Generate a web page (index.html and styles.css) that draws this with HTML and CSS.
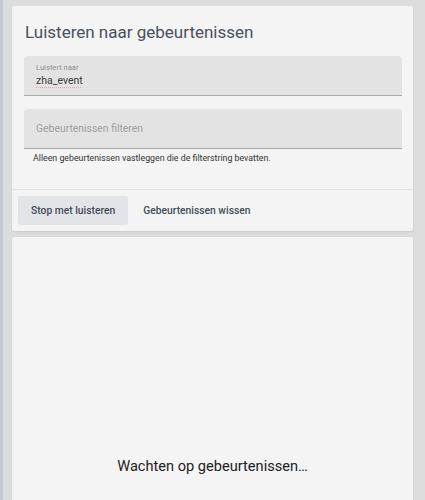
FILE: index.html
```html
<!DOCTYPE html>
<html lang="nl">
<head>
<meta charset="utf-8">
<link rel="stylesheet" href="styles.css">
</head>
<body>
<div class="page">
  <section class="card">
    <div class="card-content">
      <h1 class="title">Luisteren naar gebeurtenissen</h1>
      <div class="field">
        <span class="field-label">Luistert naar</span>
        <span class="field-value"><span class="spell">zha_event</span></span>
      </div>
      <div class="field field-empty">
        <span class="placeholder">Gebeurtenissen filteren</span>
      </div>
      <p class="helper">Alleen gebeurtenissen vastleggen die de filterstring bevatten.</p>
    </div>
    <div class="card-actions">
      <button class="btn btn-filled">Stop met luisteren</button>
      <button class="btn">Gebeurtenissen wissen</button>
    </div>
  </section>
  <section class="card card-events">
    <p class="waiting">Wachten op gebeurtenissen…</p>
  </section>
</div>
</body>
</html>
```
FILE: styles.css
```css
html, body {
  margin: 0;
  padding: 0;
  background: #dcdcdc;
  font-family: Roboto, "Noto Sans", sans-serif;
}
body {
  height: 500px;
  overflow: hidden;
  border-left: 3px solid #c6cad1;
  box-sizing: border-box;
}
.page {
  padding: 6px 12px 0 9px;
  display: flex;
  flex-direction: column;
  gap: 6px;
}
.card {
  background: #f4f4f4;
  border-radius: 2px;
  box-shadow: 0 1px 2px rgba(0,0,0,0.08);
}
.card-content {
  padding: 14px 11px 25px 12px;
  display: flex;
  flex-direction: column;
}
.title {
  margin: 0 0 12px 1px;
  font-size: 17px;
  line-height: 24px;
  font-weight: 400;
  color: #4a505d;
}
.field {
  height: 39px;
  background: #e3e3e3;
  border-bottom: 1px solid #a9a9a9;
  border-radius: 4px 4px 0 0;
  padding: 0 12px;
  display: flex;
  flex-direction: column;
  justify-content: center;
}
.field-label {
  font-size: 7.6px;
  line-height: 10px;
  color: #8f8f8f;
  margin-top: 1px;
}
.field-value {
  font-size: 10.5px;
  line-height: 16px;
  color: #3c3c3c;
}
.spell {
  text-decoration: underline dotted #eba5a5;
  text-underline-offset: 3px;
}
.field-empty {
  margin-top: 13px;
}
.placeholder {
  font-size: 10.4px;
  color: #a0a0a0;
}
.helper {
  margin: 3px 0 0 9px;
  font-size: 8.8px;
  line-height: 12px;
  color: #333;
}
.card-actions {
  border-top: 1px solid #e2e2e2;
  padding: 6px;
  display: flex;
  gap: 2px;
}
.btn {
  font-family: Roboto, "Noto Sans", sans-serif;
  font-size: 10.3px;
  font-weight: 500;
  color: #464c58;
  background: transparent;
  border: none;
  border-radius: 2px;
  height: 29px;
  padding: 0 13px;
}
.btn-filled {
  background: #e2e4e8;
}
.card-events {
  height: 300px;
  padding-top: 218px;
  box-sizing: border-box;
}
.waiting {
  margin: 0;
  text-align: center;
  font-size: 14.6px;
  line-height: 22px;
  color: #222;
}
```
